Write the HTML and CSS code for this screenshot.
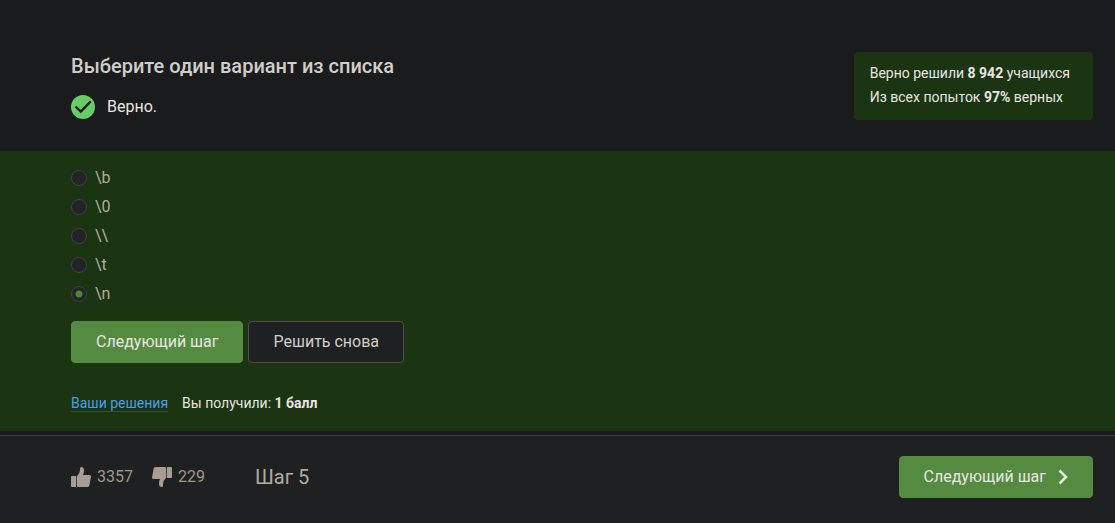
FILE: index.html
```html
<!DOCTYPE html>
<html lang="ru">
<head>
<meta charset="utf-8">
<meta name="viewport" content="width=device-width, initial-scale=1">
<title>Шаг 5</title>
<link rel="stylesheet" href="styles.css">
</head>
<body>
<main class="page">
  <header class="quiz-header">
    <div class="quiz-intro">
      <h1 class="quiz-title">Выберите один вариант из списка</h1>
      <p class="quiz-status">
        <svg class="status-icon" viewBox="0 0 24 24" aria-hidden="true"><circle cx="12" cy="12" r="12" fill="#66cc66"/><path d="M4.500 11.500L9.800 16.500L19.800 6.300" fill="none" stroke="#1b1c1e" stroke-width="2.400"/></svg>
        <span>Верно.</span>
      </p>
    </div>
    <aside class="stats">
      <p class="stats-line">Верно решили <b>8 942</b> учащихся</p>
      <p class="stats-line">Из всех попыток <b>97%</b> верных</p>
    </aside>
  </header>
  <form class="answer">
    <div class="options" role="radiogroup" aria-label="Варианты ответа">
      <label class="option"><input class="radio" type="radio" name="choice" value="b">\b</label>
      <label class="option"><input class="radio" type="radio" name="choice" value="0">\0</label>
      <label class="option"><input class="radio" type="radio" name="choice" value="backslash">\\</label>
      <label class="option"><input class="radio" type="radio" name="choice" value="t">\t</label>
      <label class="option"><input class="radio" type="radio" name="choice" value="n" checked>\n</label>
    </div>
    <div class="actions">
      <button class="button button-primary" type="button">Следующий шаг</button>
      <button class="button button-outline" type="button">Решить снова</button>
    </div>
    <div class="result">
      <a class="result-link" href="#">Ваши решения</a>
      <span>Вы получили: <b>1 балл</b></span>
    </div>
  </form>
  <footer class="step-footer">
    <button class="vote" type="button" aria-label="Нравится: 3357">
      <svg class="vote-icon" viewBox="0 0 20 20" aria-hidden="true"><path d="M1 9H5V20H1Q0 20 0 19V10Q0 9 1 9ZM5.700 9.500Q9 6.500 9 3V1.500Q9 0 10.500 0Q13 0 13 3.500Q13 6 12 8H18.500Q20 8 20 9.500L18.500 18Q18 20 16.500 20H7Q5.700 20 5.700 18.500Z"/></svg>
      3357
    </button>
    <button class="vote" type="button" aria-label="Не нравится: 229">
      <svg class="vote-icon vote-icon-down" viewBox="0 0 20 20" aria-hidden="true"><path d="M1 9H5V20H1Q0 20 0 19V10Q0 9 1 9ZM5.700 9.500Q9 6.500 9 3V1.500Q9 0 10.500 0Q13 0 13 3.500Q13 6 12 8H18.500Q20 8 20 9.500L18.500 18Q18 20 16.500 20H7Q5.700 20 5.700 18.500Z"/></svg>
      229
    </button>
    <span class="step-name">Шаг 5</span>
    <button class="button button-primary button-next" type="button">
      Следующий шаг
      <svg class="chevron" viewBox="0 0 10 16" aria-hidden="true"><path d="M1.500 1.500L8 8L1.500 14.500" fill="none" stroke="#e6e6e0" stroke-width="2.600"/></svg>
    </button>
  </footer>
</main>
</body>
</html>
```
FILE: styles.css
```css
* {
  box-sizing: border-box;
}

body {
  margin: 0;
  background: #1a1b1d;
  color: #e8e6e3;
  font-family: Roboto, "Noto Sans", sans-serif;
  font-size: 16px;
  line-height: 24px;
}

h1,
p {
  margin: 0;
}

.page {
  display: flex;
  flex-direction: column;
  min-height: 100vh;
}

.quiz-header {
  display: flex;
  justify-content: space-between;
  align-items: flex-start;
  padding: 52px 22px 31px 71px;
}

.quiz-title {
  color: #d1cec9;
  font-size: 20px;
  font-weight: 500;
  line-height: 28px;
}

.quiz-status {
  display: flex;
  align-items: center;
  gap: 12px;
  margin-top: 15px;
}

.status-icon {
  width: 24px;
  height: 24px;
}

.stats {
  padding: 9px 23px 11px 16px;
  border-radius: 4px;
  background: #1b3411;
  font-size: 14px;
}

.answer {
  padding: 12px 22px 16px 71px;
  background: #1b3411;
}

.options {
  display: flex;
  flex-direction: column;
  align-items: flex-start;
}

.option {
  display: flex;
  align-items: center;
  gap: 8px;
  color: #b2aca2;
  line-height: 29px;
}

.radio {
  appearance: none;
  width: 16px;
  height: 16px;
  margin: 0;
  border: 1px solid #3d4044;
  border-radius: 50%;
  background: #232428;
}

.radio:checked {
  background: radial-gradient(circle, #468a2d 3px, #232428 4px);
}

.actions {
  display: flex;
  gap: 5px;
  margin-top: 13px;
}

.button {
  height: 42px;
  padding: 0 24px;
  border: 1px solid transparent;
  border-radius: 4px;
  font: inherit;
  cursor: pointer;
}

.button-primary {
  border-color: #548b41;
  background: #548b41;
  color: #e8e6e3;
}

.button-outline {
  border-color: #4c4e52;
  background: #1f2022;
  color: #d1cec9;
}

.result {
  display: flex;
  gap: 14px;
  margin-top: 28px;
  font-size: 14px;
}

.result-link {
  align-self: center;
  border-bottom: 1px solid #2b5541;
  color: #4a9eee;
  line-height: 16px;
  text-decoration: none;
}

.step-footer {
  display: flex;
  align-items: center;
  flex: 1;
  margin-top: 4px;
  padding: 0 22px 5px 71px;
  border-top: 1px solid #3a3d40;
  background: #1f2022;
}

.vote {
  display: flex;
  align-items: center;
  gap: 6px;
  margin-right: 19px;
  padding: 0;
  border: 0;
  background: none;
  color: #9f978b;
  font: inherit;
  cursor: pointer;
}

.vote-icon {
  width: 20px;
  height: 20px;
  fill: #a69e92;
}

.vote-icon-down {
  transform: rotate(180deg);
}

.step-name {
  margin-left: 31px;
  color: #b2aca2;
  font-size: 20px;
}

.button-next {
  display: flex;
  align-items: center;
  gap: 12px;
  margin-left: auto;
}

.chevron {
  width: 10px;
  height: 16px;
}
```
